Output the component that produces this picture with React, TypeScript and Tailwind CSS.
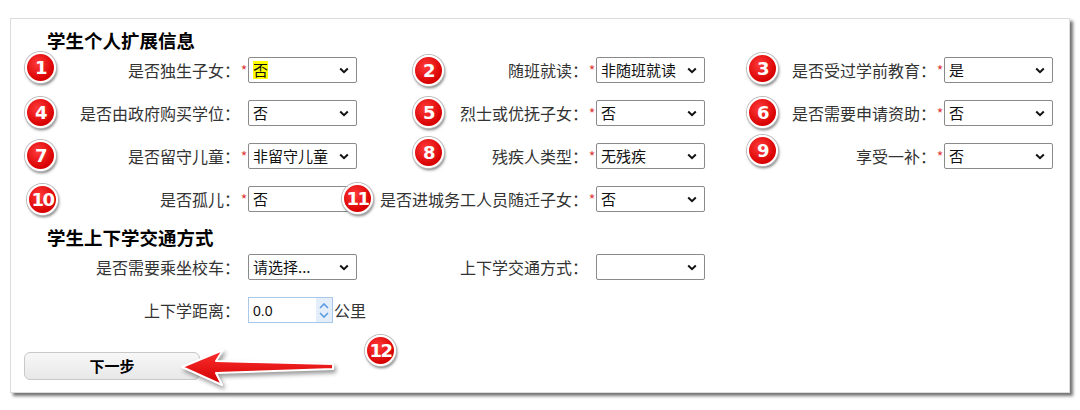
import React from 'react'

const cjk = "font-['Microsoft_YaHei','Noto_Sans_CJK_SC',sans-serif]"

function Badge({ n, className }: { n: number; className: string }) {
  return (
    <span
      className={`absolute z-10 flex h-[31px] w-[31px] items-center justify-center rounded-full border-[2.5px] border-white bg-[radial-gradient(circle_at_40%_35%,#ff3b3b,#d80000_70%)] font-['DejaVu_Sans',sans-serif] text-[18px] font-bold tracking-[-1.5px] text-white shadow-[1px_2px_3px_rgba(0,0,0,0.55)] ring-1 ring-[#bbb] ${className}`}
    >
      {n}
    </span>
  )
}

function Chevron() {
  return (
    <svg width="10" height="7" viewBox="0 0 10 7" className="shrink-0">
      <path d="M1.2 1.5 L5 5.2 L8.8 1.5" fill="none" stroke="#111" strokeWidth="2" />
    </svg>
  )
}

type FieldProps = {
  label: string
  req?: boolean
  value?: string
  hl?: boolean
  text?: boolean
  badge?: number
  bcls?: string
}

function Field({ label, req, value = '', hl, text, badge, bcls = '' }: FieldProps) {
  return (
    <div className="relative flex h-[26px] items-center">
      {badge && <Badge n={badge} className={bcls} />}
      <span className="w-[220px] whitespace-nowrap text-right text-[16px] leading-none text-[#333]">{label}：</span>
      <span className="h-[26px] w-[8px] pt-[6px] text-center text-[14px] leading-none text-[#e03a3a]">{req ? '*' : ''}</span>
      <div className="flex h-[26px] w-[109px] items-center justify-between rounded-[2px] border border-[#8a8a8a] bg-white pl-[4px] pr-[7px]">
        <span className={`text-[15px] leading-[18px] text-[#111] ${hl ? 'bg-[#ffff00]' : ''}`}>{value}</span>
        {!text && <Chevron />}
      </div>
    </div>
  )
}

export default function App() {
  return (
    <div className={`h-[410px] w-[1080px] bg-white pl-[10px] pt-[18px] ${cjk}`}>
      <div className="h-[375px] w-[1060px] border border-[#dcdcdc] bg-white pl-[9px] pt-[10px] shadow-[3px_3px_3px_rgba(0,0,0,0.55)]">
        <div className="h-[22px] pl-[27px] text-[18.5px] font-bold leading-[22px] text-black">学生个人扩展信息</div>

        <div className="mt-[6px] grid grid-cols-[348px_348px_348px] gap-y-[17px]">
          <Field label="是否独生子女" req value="否" hl badge={1} bcls="left-[5px] top-[-5px]" />
          <Field label="随班就读" req value="非随班就读" badge={2} bcls="left-[45px] top-[-2px]" />
          <Field label="是否受过学前教育" req value="是" badge={3} bcls="left-[31px] top-[-4px]" />

          <Field label="是否由政府购买学位" value="否" badge={4} bcls="left-[5px] top-[-3px]" />
          <Field label="烈士或优抚子女" req value="否" badge={5} bcls="left-[45px] top-[-3px]" />
          <Field label="是否需要申请资助" req value="否" badge={6} bcls="left-[31px] top-[-3px]" />

          <Field label="是否留守儿童" req value="非留守儿童" badge={7} bcls="left-[5px] top-[-3px]" />
          <Field label="残疾人类型" req value="无残疾" badge={8} bcls="left-[45px] top-[-6px]" />
          <Field label="享受一补" req value="否" badge={9} bcls="left-[31px] top-[-8px]" />

          <Field label="是否孤儿" req value="否" text badge={10} bcls="left-[7px] top-[-2px]" />
          <Field label="是否进城务工人员随迁子女" req value="否" badge={11} bcls="left-[-26px] top-[-3px]" />
        </div>

        <div className="mt-[14px] h-[22px] pl-[27px] text-[18.5px] font-bold leading-[22px] text-black">学生上下学交通方式</div>

        <div className="mt-[6px] grid grid-cols-[348px_348px_348px] gap-y-[17px]">
          <Field label="是否需要乘坐校车" value="请选择..." />
          <Field label="上下学交通方式" />
          <div className="col-start-1 flex h-[26px] items-center">
            <span className="w-[220px] whitespace-nowrap text-right text-[16px] leading-none text-[#333]">上下学距离：</span>
            <span className="w-[8px]" />
            <div className="flex h-[26px] w-[85px] items-stretch border border-[#a9c7e8] bg-white">
              <span className="flex-1 self-end pb-[2px] pl-[4px] font-['Liberation_Sans',sans-serif] text-[14px] leading-[18px] text-[#111]">0.0</span>
              <div className="flex w-[16px] flex-col items-center justify-center gap-[3px] bg-[#e3eefa]">
                <svg width="10" height="6" viewBox="0 0 10 6">
                  <path d="M1 5 L5 1 L9 5" fill="none" stroke="#5b9be0" strokeWidth="1.6" />
                </svg>
                <svg width="10" height="6" viewBox="0 0 10 6">
                  <path d="M1 1 L5 5 L9 1" fill="none" stroke="#5b9be0" strokeWidth="1.6" />
                </svg>
              </div>
            </div>
            <span className="pl-[1px] text-[16px] leading-none text-[#333]">公里</span>
          </div>
        </div>

        <div className="relative mt-[29px] h-[28px]">
          <button className="ml-[4px] flex h-[28px] w-[176px] items-center justify-center rounded-[6px] border border-[#c8c8c8] bg-[linear-gradient(#f7f7f7,#e8e8e8)] text-[15px] font-bold text-black">
            下一步
          </button>
          <svg
            width="170"
            height="50"
            viewBox="0 0 170 50"
            className="absolute left-[155px] top-[-7px] drop-shadow-[2px_3px_2px_rgba(0,0,0,0.4)]"
          >
            <defs>
              <linearGradient id="ar" x1="0" y1="0" x2="0" y2="1">
                <stop offset="0" stopColor="#ff3030" />
                <stop offset="1" stopColor="#d00000" />
              </linearGradient>
            </defs>
            <path
              d="M7 22 L48 5 L41 16 L158 19 L158 24 L41 28 L47 40 Z"
              fill="url(#ar)"
              stroke="#fff"
              strokeWidth="2"
              strokeLinejoin="round"
            />
          </svg>
          <Badge n={12} className="left-[345px] top-[-17px]" />
        </div>
      </div>
    </div>
  )
}
